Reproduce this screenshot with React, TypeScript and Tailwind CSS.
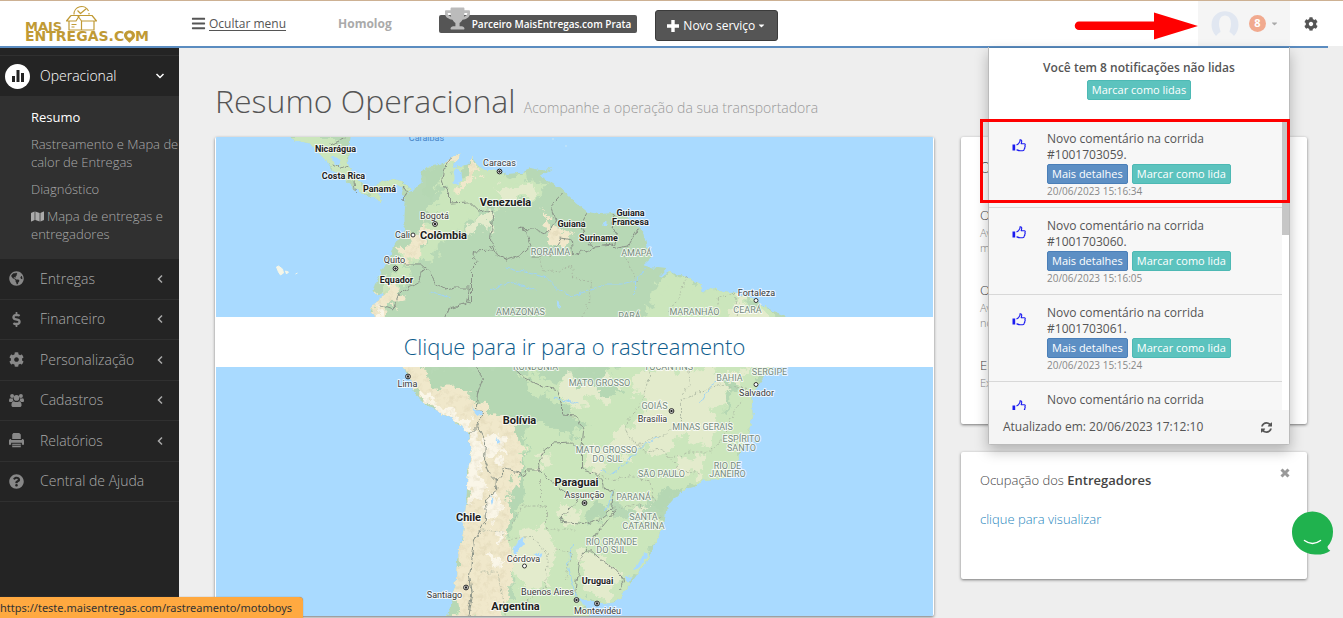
import React from "react";
import {
  FaBars,
  FaTrophy,
  FaCaretDown,
  FaCog,
  FaGlobeAmericas,
  FaDollarSign,
  FaQuestionCircle,
  FaMap,
} from "react-icons/fa";

const GOLD = "#c09a35";

function Logo() {
  return (
    <svg viewBox="0 0 130 38" className="h-[38px] w-[130px]" role="img" aria-label="Mais Entregas.com">
      <g fill={GOLD} fontFamily="'DejaVu Sans', sans-serif" fontWeight="700">
        <text x="1" y="25.500" fontSize="13">MAIS</text>
        <text x="1" y="36" fontSize="14">ENTREGAS.C</text>
        <text x="111" y="36" fontSize="14">M</text>
      </g>
      <path d="M105.500 25.500c-3.300 0-5.500 2.200-5.500 4.900 0 3.200 3.300 4.600 5.500 7.400 2.200-2.800 5.500-4.200 5.500-7.400 0-2.700-2.200-4.900-5.500-4.900z" fill={GOLD} />
      <circle cx="105.500" cy="30.500" r="2.300" fill="#fff" />
      <g fill="none" stroke={GOLD} strokeWidth="1.200" strokeLinejoin="round">
        <path d="M50 9.500A7.600 7.600 0 0 1 64.500 6M65 8v1.500" />
        <path d="M53.500 5.500l3 3 6-5" />
        <path d="M47 10.500h21l4.500 5.500h-15l-4-5.500M47 10.500L42.500 16H52l3.500-5.500M45 16v9h25v-9M57.500 16v9M47.500 19.500h5M47.500 22h3" />
      </g>
    </svg>
  );
}

function UsersIcon({ className }: { className?: string }) {
  return (
    <svg viewBox="0 0 16 14" className={className} fill="currentColor" aria-hidden="true">
      <circle cx="3.300" cy="2.200" r="2.100" />
      <circle cx="12.700" cy="2.200" r="2.100" />
      <circle cx="8" cy="4.200" r="3" />
      <path d="M1.300 4.500C.3 4.500 0 6 0 7.500 0 8.300.6 8.600 1.500 8.600H3c.5-.6 1.200-1 1.800-1.100C4.300 6.600 4 5.700 4.100 4.600c-1 .5-1.900.3-2.800-.1zM14.700 4.500c1 0 1.300 1.500 1.300 3 0 .8-.6 1.100-1.500 1.100H13c-.5-.6-1.200-1-1.800-1.100.5-.9.800-1.800.7-2.900 1 .5 1.900.3 2.800-.1z" />
      <path d="M5.200 7.700C3.500 7.700 2.600 9.600 2.600 11.800 2.600 13.200 3.400 14 4.600 14h6.800c1.200 0 2-.8 2-2.200 0-2.200-.9-4.100-2.600-4.100-1.700 1.300-3.900 1.300-5.600 0z" />
    </svg>
  );
}

function PrintIcon({ className }: { className?: string }) {
  return (
    <svg viewBox="0 0 14 14" className={className} fill="currentColor" aria-hidden="true">
      <path d="M4 0h5.500L11 1.500V5.500H3V1.500zM1.500 5.500H2V6.500h10V5.500h.5C13.400 5.500 14 6.200 14 7v4h-2V9H2v2H0V7c0-.8.700-1.500 1.500-1.500zM3 10h8v3.200H3z" />
      <path d="M3 11.500h8" stroke="#242424" strokeWidth=".7" />
    </svg>
  );
}

function ThumbIcon({ className }: { className?: string }) {
  return (
    <svg viewBox="0 0 14 13" className={className} aria-hidden="true">
      <path d="M.5 5.500h2.700v6H.5z" fill="#1a1af0" />
      <path d="M4.500 6L6.500 4.800 8 2.300V.8c1.400-.3 2 .8 1.600 2.200L9.200 4.700h3.100c1 .1 1.200 1.200.6 1.800.5.700.3 1.300-.2 1.800.3.700 0 1.300-.5 1.600.1 1.100-.5 1.800-1.600 1.800H8c-1.300 0-2.300-.5-3.500-1" fill="none" stroke="#1a1af0" strokeWidth="1.100" strokeLinejoin="round" />
    </svg>
  );
}

type Label = [number, number, string, number?];

const countries: Label[] = [
  [336, 152, "Nicarágua", 9],
  [344, 179, "Costa Rica", 9],
  [380, 192, "Panamá", 9],
  [506, 206, "Venezuela", 11],
  [444, 239, "Colômbia", 11],
  [572, 227, "Guiana", 9],
  [599, 241, "Suriname", 9],
  [631, 216, "Guiana", 9],
  [631, 225, "Francesa", 9],
  [397, 283, "Equador", 9],
  [520, 424, "Bolívia", 11],
  [577, 486, "Paraguai", 11],
  [469, 521, "Chile", 11],
  [598, 584, "Uruguai", 9],
  [516, 610, "Argentina", 11],
];
const cities: Label[] = [
  [500, 166, "Caracas"],
  [435, 219, "Bogotá"],
  [403, 238, "Cali"],
  [395, 263, "Quito"],
  [757, 296, "Fortaleza"],
  [408, 387, "Lima"],
  [757, 396, "Salvador"],
  [653, 422, "Brasília"],
  [585, 498, "Assunção"],
  [524, 562, "Córdova"],
  [548, 595, "Buenos Aires"],
  [445, 598, "Santiago"],
  [598, 614, "Montevidéu"],
];
const states: Label[] = [
  [551, 255, "RORAIMA"],
  [637, 256, "AMAPÁ"],
  [521, 315, "AMAZONAS"],
  [630, 319, "PARÁ"],
  [695, 315, "MARANHÃO"],
  [748, 313, "CEARÁ"],
  [536, 370, "RONDÔNIA"],
  [669, 370, "TOCANTINS"],
  [600, 386, "MATO GROSSO"],
  [730, 381, "BAHIA"],
  [770, 375, "SERGIPE"],
  [655, 409, "GOIÁS"],
  [703, 430, "MINAS GERAIS"],
  [742, 442, "ESPÍRITO"],
  [742, 451, "SANTO"],
  [607, 453, "MATO GROSSO"],
  [608, 462, "DO SUL"],
  [662, 477, "SÃO PAULO"],
  [728, 469, "RIO DE"],
  [728, 477, "JANEIRO"],
  [634, 500, "PARANÁ"],
  [644, 520, "SANTA"],
  [644, 529, "CATARINA"],
  [612, 545, "RIO GRANDE"],
  [612, 553, "DO SUL"],
];
const capitals = [
  [500, 171.500], [435.500, 224], [396, 268.500], [408.500, 376.500], [672, 411],
  [585, 503], [466.500, 587.500], [577, 600], [597.500, 603.500],
];
const towns = [[413.500, 235], [756.500, 300.500], [756.500, 384.500], [525, 566]];

const LAND =
  "M288 136L297 141L310 143L316 150L324 158L331 168L342 176L352 186L356 192L354 186L362 193L372 197L380 201L382 196L377 193L388 189L397 185L404 187L402 195L406 202L405 215L405 225L402 234L395 245L391 256L386 265L382 272L377 281L374 291L377 297L383 291L382 298L373 304L371 311L380 328L393 352L403 367L412 380L416 395L425 403L440 412L455 420L470 435L471 455L468 475L467 500L464 530L458 555L456 585L451 605L448 618L588 618L590 610L578 598L590 601L603 604L617 602L625 590L632 582L647 561L657 541L665 524L667 507L674 499L683 491L694 488L703 480L717 479L732 477L733 468L740 457L747 440L751 425L753 413L752 398L757 387L767 373L785 355L795 335L787 316L773 311L757 300L746 295L733 293L720 290L710 287L703 293L702 285L687 277L670 272L659 278L667 269L650 267L643 265L653 256L647 246L644 233L637 224L625 217L613 213L600 214L588 212L577 203L563 190L552 183L540 177L552 169L539 171L530 169L520 173L507 174L493 170L483 170L477 164L472 157L469 163L462 166L453 167L458 160L461 154L454 155L447 162L437 165L428 167L422 174L422 183L414 188L408 197L411 190L404 182L394 179L383 182L373 188L363 184L353 174L348 162L350 148L351 136Z";

const PALE_GREEN =
  "M288 136L310 143L331 168L354 188L380 200L377 193L402 186L408 190L394 179L373 188L353 174L348 162L340 150L330 136Z M436 166L447 158L460 178L470 172L477 165L490 172L520 180L545 186L530 200L515 198L500 207L480 208L466 220L452 232L440 240L430 252L432 235L422 240L430 220L444 205L440 190L434 180Z M418 240L424 232L420 252L405 272L395 290L386 286L400 262Z M418 258L438 245L436 256L424 258Z M655 295L670 272L703 285L733 293L773 311L795 335L785 355L757 387L753 413L740 457L732 477L703 480L683 491L660 494L640 500L630 508L612 498L600 512L630 525L660 518L665 524L632 582L617 602L578 598L588 618L448 618L520 600L512 565L508 540L520 520L512 480L524 440L532 410L555 392L522 385L515 374L545 380L575 388L600 372L640 362L648 330Z";

const CREAM_GREEN =
  "M480 216L492 212L494 225L478 230L462 232Z M497 186L515 192L525 182L541 190L527 198L514 200L499 194Z M733 297L746 296L768 318L785 325L780 350L740 366L720 360L724 330Z M640 372L665 366L690 374L710 368L735 374L748 366L740 390L722 386L728 402L712 408L720 432L700 445L682 436L662 456L640 446L628 460L610 446L618 430L640 424L652 400L632 394Z M570 374L596 368L618 384L604 402L588 396L570 410L563 398Z M600 444L612 452L606 470L596 478L586 468L590 454Z M676 460L696 452L712 462L700 474L680 476Z M520 530L546 524L556 545L548 582L528 592L512 568Z M580 548L606 556L622 574L608 598L584 590Z M562 500L575 510L566 528L556 514Z M640 505L655 500L650 512L636 516Z M512 378L520 376L524 388L512 390Z M540 452L552 450L550 464L542 470Z";

const DEEP_GREEN =
  "M416 368L432 386L450 394L478 398L490 418L520 424L525 440L522 466L512 478L510 500L506 528L515 526L522 500L524 484L526 450L528 426L545 421L560 436L572 430L578 444L583 424L566 408L548 402L528 384L514 368Z M658 492L682 488L674 499L666 507L652 510L640 504L658 500Z M592 505L600 498L604 520L592 526L586 516Z M575 367L602 367L614 374L602 378L620 388L612 396L590 384L575 382Z M425 170L444 166L442 182L434 198L424 196Z M725 386L735 384L732 410L724 420Z M734 340L742 338L740 350Z";

const ANDES =
  "M383 291L394 286L400 296L396 310L380 304L395 340L415 367L428 378L440 390L452 390L464 396L480 404L488 418L505 420L520 430L522 460L514 482L510 508L505 535L512 555L508 585L500 618L460 618L456 585L458 555L464 530L467 500L468 475L471 455L470 435L440 412L416 395L403 367L380 328L371 311L374 303Z M453 155L461 154L455 164L449 166Z M470 157L478 170L468 180L456 192L468 172Z M405 250L418 238L424 220L428 235L418 252L408 265Z M547 215L556 226L566 240L562 248L550 240L548 226Z";

const PALE_SAND =
  "M416 388L430 400L445 408L460 416L471 426L478 440L486 455L482 476L490 488L474 504L467 500L468 475L471 455L470 435L440 412L418 398Z M484 432L495 430L500 440L504 454L494 460L482 452Z M490 496L503 500L496 520L490 530L486 515Z M490 550L500 556L496 568L488 560Z M373 304L380 310L384 326L376 318Z M498 534L506 530L504 545L498 542Z";

const BORDERS =
  "M330 145L345 138 M332 164L344 168L349 166 M354 178L356 192 M404 186L408 192L402 200 M452 156L444 170L442 182L450 192L450 203L470 202L480 212L493 210L494 218L491 240L498 255L508 260L520 256L532 245L526 230L519 228L534 229L545 234L556 222L551 207L563 194 M532 256L548 256L556 246L562 238L572 240L573 255L590 250L596 247L612 245L618 248L628 246L639 228 M588 213L581 225L588 240L594 248 M614 214L612 225L618 234L614 245 M491 246L494 250L474 251L473 258L479 262L472 270L472 303L467 302L470 288L455 288L447 290L437 284L430 272L421 264L407 264L396 262L385 258 M424 268L419 282L400 292L393 310L379 305 M468 303L450 308L446 318 M476 367L484 378L478 394L477 406L483 414L478 426L470 434 M478 426L486 442L485 460L492 478L498 478L506 469L520 472L523 478L528 470L538 470L545 450L553 444L572 443L582 453L582 470L595 473L602 480L604 488L614 490L612 510L600 520L588 524L560 521L578 500L558 487L538 470 M514 368L525 378L542 386L558 390L562 405L562 415L577 416L584 430L582 453 M498 478L497 490L486 500L487 520L475 540L473 555L470 575L473 595L469 618 M616 510L600 530L585 551L580 562L576 595 M585 551L592 551L604 562L616 570L625 580L620 590";

const DOTTED =
  "M540 258L544 270L560 272L572 264L573 278L592 282L590 300L582 318 M625 255L632 270L638 282 M688 276L678 300L668 312 M734 293L718 300L716 316 M736 294L738 317 M650 372L646 390L640 406L626 424L628 436L640 446L652 438L668 434L682 420L682 400L700 392L722 384L750 390 M688 367L690 384L682 396 M640 446L645 452L664 450L672 458L690 452L712 452L724 436L730 420L742 400 M664 450L680 470L700 474 M595 473L610 480L636 476L650 482L655 500 M613 508L640 505L650 520L664 518 M541 480L541 506L547 506L547 530L576 530 M547 506L522 506L510 530 M483 530L504 532L505 540L532 536L548 555L546 588L522 604 M480 572L498 572L504 600L506 618 M556 550L572 552L566 580";

const RIVERS =
  "M505 268L525 272L548 278L560 290L572 296L592 290L606 284L622 284L638 280L645 268 M430 292L452 298 M490 290L510 282L535 290 M636 282L636 295 M600 470L612 474L628 462L640 448L660 436 M614 490L606 512 M700 404L712 385L722 378 M577 598L572 580L568 562L574 545 M554 398L580 404";

function SouthAmericaMap() {
  return (
    <svg viewBox="216 137 718 479" preserveAspectRatio="xMidYMid slice" className="block h-full w-full" role="img" aria-label="Mapa da América do Sul">
      <defs>
        <filter id="rough" x="-5%" y="-5%" width="110%" height="110%">
          <feTurbulence type="fractalNoise" baseFrequency="0.070" numOctaves="4" seed="4" />
          <feDisplacementMap in="SourceGraphic" scale="26" xChannelSelector="R" yChannelSelector="G" />
        </filter>
        <filter id="coast" x="-5%" y="-5%" width="110%" height="110%">
          <feTurbulence type="fractalNoise" baseFrequency="0.150" numOctaves="3" seed="9" />
          <feDisplacementMap in="SourceGraphic" scale="6" xChannelSelector="R" yChannelSelector="G" />
        </filter>
        <filter id="relief" x="0%" y="0%" width="100%" height="100%">
          <feTurbulence type="fractalNoise" baseFrequency="0.160" numOctaves="3" seed="2" result="n" />
          <feColorMatrix in="n" type="matrix" values="0 0 0 0 .63  0 0 0 0 .56  0 0 0 0 .36  3 0 0 0 -1.400" />
          <feComposite in2="SourceGraphic" operator="in" />
        </filter>
        <clipPath id="land"><path d={LAND} /></clipPath>
      </defs>
      <rect x="0" y="0" width="1400" height="800" fill="#a9daff" />
      <g filter="url(#coast)">
        <path d={LAND} fill="#b7d8b5" />
        <g clipPath="url(#land)">
          <g filter="url(#rough)">
            <path d={PALE_GREEN} fill="#cbe6bc" stroke="#cbe6bc" strokeWidth="6" />
            <path d={CREAM_GREEN} fill="#e3ebcc" />
            <path d={DEEP_GREEN} fill="#b5d7b3" />
            <path d={ANDES} fill="#f0e8cb" stroke="#f0e8cb" strokeWidth="3" />
            <path d={PALE_SAND} fill="#faf6e8" />
          </g>
          <path d={ANDES} filter="url(#relief)" opacity=".3" />
        </g>
        <path d={BORDERS} fill="none" stroke="#8a9388" strokeWidth="1" strokeLinejoin="round" />
        <path d={RIVERS} fill="none" stroke="#9fd3f5" strokeWidth="1" />
        <path d={DOTTED} fill="none" stroke="#a5b09c" strokeWidth=".8" strokeDasharray="2 2" />
        <g fill="#a9daff">
          <path d="M456 168L462 172L463 180L458 186L454 182L454 174Z M332 157L342 160L340 166L334 163Z M473 406L480 410L483 416L478 415Z M497 437L501 442L498 444Z M513 550L519 540L525 538L524 546L516 554Z M535 554L543 552L540 557Z M644 553L649 553L640 568L634 570Z M626 578L632 576L628 584Z M374 296L384 294L378 299Z M491 496L494 500L492 505Z" />
          <path d="M557 300l4 5-2 3zM605 222h3v4h-3z" />
        </g>
      </g>
      <path d="M277 267l2-1 4 3 1 4-3 2-2-3zM286 271l3 1-2 2zM296 274l2-1M553 139h1M566 146h1" stroke="#f5f6e8" strokeWidth="1" fill="#f5f6e8" />
      <g fontFamily="Roboto, sans-serif" textAnchor="middle" stroke="#fff" strokeOpacity=".75" strokeWidth="2" strokeLinejoin="round" paintOrder="stroke">
        <text x="427" y="141" fontSize="9" fill="#4a86c8" strokeOpacity="0">Caraíbas</text>
        <g fill="#758a7d" fontSize="9">
          {states.map(([x, y, t], i) => <text key={i} x={x} y={y}>{t}</text>)}
        </g>
        <g fill="#3a3a3a" fontSize="9">
          {cities.map(([x, y, t]) => <text key={t} x={x} y={y}>{t}</text>)}
        </g>
        <g fill="#1d1d1d" fontWeight="700">
          {countries.map(([x, y, t, s], i) => <text key={i} x={x} y={y} fontSize={s}>{t}</text>)}
        </g>
      </g>
      {capitals.map(([x, y]) => (
        <g key={x}>
          <circle cx={x} cy={y} r="2.400" fill="#fff" stroke="#222" strokeWidth="1" />
          <circle cx={x} cy={y} r="1.200" fill="#222" />
        </g>
      ))}
      {towns.map(([x, y]) => <circle key={y} cx={x} cy={y} r="2" fill="#fff" stroke="#333" strokeWidth="1" />)}
    </svg>
  );
}

const menu = [
  { label: "Entregas", Icon: FaGlobeAmericas, arrow: true },
  { label: "Financeiro", Icon: FaDollarSign, arrow: true },
  { label: "Personalização", Icon: FaCog, arrow: true },
  { label: "Cadastros", Icon: UsersIcon, arrow: true },
  { label: "Relatórios", Icon: PrintIcon, arrow: true },
  { label: "Central de Ajuda", Icon: FaQuestionCircle, arrow: false },
];

function Chevron({ d }: { d: string }) {
  return (
    <svg viewBox="0 0 10 10" className="size-2.5" fill="none" stroke="currentColor" strokeWidth="1.500" aria-hidden="true">
      <path d={d} />
    </svg>
  );
}

function Sidebar() {
  return (
    <nav className="w-[179px] shrink-0 bg-[#242424] pt-[7px] font-light text-[#aaa]">
      <a href="#operacional" className="flex h-[41px] items-center border-t border-[#303030] pl-[5px] pr-3.5 text-sm text-white">
        <span className="flex size-[25px] items-center justify-center rounded-full bg-white">
          <svg viewBox="0 0 14 14" className="size-3.5" aria-hidden="true">
            <path d="M1 7h3v6H1zM5.500 1h3v12h-3zM10 4h3v9h-3z" fill="#242424" />
          </svg>
        </span>
        <span className="ml-2.5 flex-1">Operacional</span>
        <Chevron d="M1.500 3l3.500 3.500L8.500 3" />
      </a>
      <ul className="flex h-[163px] flex-col gap-[9px] bg-[#303030] pt-3 pl-[31px] text-[13px] leading-[18px]">
        <li><a href="#resumo" className="font-normal text-white">Resumo</a></li>
        <li><a href="#calor">Rastreamento e Mapa de calor de Entregas</a></li>
        <li><a href="#diagnostico">Diagnóstico</a></li>
        <li>
          <a href="#mapa">
            <FaMap className="mr-[3px] inline size-[13px] align-[-2px]" />
            Mapa de entregas e entregadores
          </a>
        </li>
      </ul>
      <ul className="grid h-[243px] auto-rows-fr">
        {menu.map(({ label, Icon, arrow }) => (
          <li key={label} className="border-b border-[#303030]">
            <a href="#menu" className="flex h-full items-center pl-[9px] pr-3.5 text-sm">
              <Icon className="size-[15px] text-[#888]" />
              <span className="ml-4 flex-1">{label}</span>
              {arrow && <Chevron d="M7 1.500L3.500 5 7 8.500" />}
            </a>
          </li>
        ))}
      </ul>
    </nav>
  );
}

const notices = [
  { id: "1001703059", time: "20/06/2023 15:16:34" },
  { id: "1001703060", time: "20/06/2023 15:16:05" },
  { id: "1001703061", time: "20/06/2023 15:15:24" },
  { id: "1001703062", time: "20/06/2023 15:14:50" },
];

const tealButton = "h-5 rounded-[2px] border border-[#4db9b4] bg-[#5cc3be] px-1 text-[11px] leading-[18px] font-medium text-white";
const blueButton = "h-5 rounded-[2px] border border-[#4a7fb8] bg-[#5d8fc4] px-1 text-[11px] leading-[18px] font-medium text-white";

function Notifications() {
  return (
    <section className="absolute top-[46px] right-0 z-20 w-[302px] rounded-b-[3px] border border-t-0 border-[#bbb] bg-white text-xs text-[#555] shadow-[0_6px_14px_rgba(0,0,0,0.25)]">
      <div className="flex h-[73px] flex-col items-center border-t border-[#4f7fae] pt-[11px]">
        <h2 className="text-xs leading-[18px] font-semibold">Você tem 8 notificações não lidas</h2>
        <button className={"mt-[3px] " + tealButton}>Marcar como lidas</button>
      </div>
      <div className="flex h-[290px] overflow-hidden">
        <ul className="flex-1">
          {notices.map((n) => (
            <li key={n.id} className="flex h-[87px] border-t border-[#d8d8d8] bg-[#f7f7f7] pt-2.5 pl-[23px]">
              <ThumbIcon className="mt-2 h-[13px] w-3.5 shrink-0" />
              <div className="ml-[21px]">
                <p className="w-[170px] leading-4">Novo comentário na corrida #{n.id}.</p>
                <div className="mt-px flex gap-1">
                  <button className={blueButton}>Mais detalhes</button>
                  <button className={tealButton}>Marcar como lida</button>
                </div>
                <time className="block text-[10px] leading-[14px] text-[#888]">{n.time}</time>
              </div>
            </li>
          ))}
        </ul>
        <div className="w-[7px]"><div className="h-[115px] bg-[#c6c6c6]" /></div>
      </div>
      <footer className="flex h-[34px] items-center justify-between bg-[#f4f4f4] pr-[17px] pl-3.5">
        <span>Atualizado em: 20/06/2023 17:12:10</span>
        <button aria-label="Atualizar">
          <svg viewBox="0 0 1536 1536" className="size-[11px]" fill="#555" aria-hidden="true">
            <path d="M1511 928q0 5-1 7-64 268-268 434.500T764 1536q-146 0-282.500-55T238 1324l-129 129q-19 19-45 19t-45-19-19-45V960q0-26 19-45t45-19h448q26 0 45 19t19 45-19 45l-137 137q71 66 161 102t187 36q134 0 250-65t186-179q11-17 53-117 8-23 30-23h192q13 0 22.500 9.500t9.500 22.500zm25-800v448q0 26-19 45t-45 19h-448q-26 0-45-19t-19-45 19-45l138-138Q969 256 768 256q-134 0-250 65T332 500q-11 17-53 117-8 23-30 23H50q-13 0-22.500-9.500T18 608v-7q65-268 270-434.500T768 0q146 0 284 55.500T1297 212l130-129q19-19 45-19t45 19 19 45z" />
          </svg>
        </button>
      </footer>
      <div className="pointer-events-none absolute -left-[9px] top-[72px] h-[84px] w-[310px] border-[3px] border-[#f00]" />
    </section>
  );
}

function Header() {
  return (
    <header className="border-t border-[#cdb193] bg-white">
      <div className="flex h-[45px] items-center">
        <a href="#inicio" className="w-[191px] pl-6"><Logo /></a>
        <a href="#menu" className="flex items-center text-xs text-[#555]">
          <FaBars className="mr-[3px] size-[15px]" />
          <span className="underline underline-offset-2">Ocultar menu</span>
        </a>
        <span className="ml-[52px] text-xs font-bold text-[#aaa]">Homolog</span>
        <div className="ml-[47px] flex h-[18px] items-center rounded-[2px] bg-[#555] pr-1.5 pl-1.5 text-[10px] font-semibold text-white">
          <FaTrophy className="-mt-2.5 mr-0.5 size-[25px] text-[#bbb]" />
          <span className="mt-px">Parceiro MaisEntregas.com Prata</span>
        </div>
        <button className="mt-1 ml-[18px] flex h-[31px] items-center rounded-[3px] border border-[#3b3b3b] bg-[#555] px-[11px] text-[12px] text-white">
          <svg viewBox="0 0 12 12" className="mr-1 size-3" aria-hidden="true">
            <path d="M4.300 0h3.400v4.300H12v3.400H7.700V12H4.300V7.700H0V4.300h4.300z" fill="#fff" />
          </svg>
          Novo serviço
          <FaCaretDown className="ml-0.5 size-[9px]" />
        </button>
        <svg viewBox="0 0 124 28" className="mt-1 ml-auto h-7 w-[124px]" aria-hidden="true">
          <path d="M5 9.500H80V.5L124 14 80 27.500V18H5a4.200 4.200 0 0 1 0-8.500z" fill="#f00" />
        </svg>
        <div className="relative h-full">
          <button className="flex h-full w-[92px] items-center bg-[#f5f5f5] pl-[13px]" aria-label="Notificações">
            <svg viewBox="0 0 28 26" className="h-[26px] w-7" aria-hidden="true">
              <path d="M5 25C-1 19-1 8 5 3.500 10-.8 18-.8 23 3.500 29 8 29 19 23 25c-1-1.500-3-3-4.500-4 0-2 1.500-4 1.500-8 0-5-2-8.500-6-8.500S8 8 8 13c0 4 1.500 6 1.500 8C8 22 6 23.500 5 25z" fill="#e1e7f1" />
            </svg>
            <span className="ml-[10px] flex size-[17px] items-center justify-center rounded-full bg-[#f1aa8f] text-[11px] font-bold text-white">8</span>
            <FaCaretDown className="ml-1 size-[9px] text-[#aaa]" />
          </button>
          <Notifications />
        </div>
        <button className="mr-[25px] ml-3.5" aria-label="Configurações"><FaCog className="size-3.5 text-[#555]" /></button>
      </div>
      <div className="bg-[#eee] pr-[15px]"><div className="h-0.5 bg-[#5b8cc0]" /></div>
    </header>
  );
}

const summaries = [
  ["Ocorrências", "Avaliações", "médias"],
  ["Objetivos", "Avaliações", "notáveis"],
  ["Entregas", "Extrato", ""],
];

const card = "rounded-[2px] bg-white shadow-[0_1px_3px_rgba(0,0,0,0.5)]";

export default function App() {
  return (
    <div className="relative flex h-screen flex-col overflow-hidden bg-[#eee] font-['Open_Sans',sans-serif] text-[#444]">
      <Header />
      <div className="flex min-h-0 flex-1">
        <Sidebar />
        <main className="min-w-0 flex-1 px-9 pt-8">
          <h1 className="h-[57px] text-[32px] leading-[42px] font-light text-[#555]">
            Resumo Operacional <small className="text-sm text-[#999]">Acompanhe a operação da sua transportadora</small>
          </h1>
          <div className="grid grid-cols-3 items-start gap-[27px]">
            <a href="#rastreamento" className={"relative col-span-2 block h-[479px] overflow-hidden px-px " + card}>
              <SouthAmericaMap />
              <span className="absolute inset-x-px top-[180px] flex h-[50px] items-center justify-center bg-white pt-2 text-[22px] font-light text-[#0d5c8c]">
                Clique para ir para o rastreamento
              </span>
            </a>
            <div className="flex flex-col gap-7">
              <section className={"h-[287px] px-[19px] pt-[22px] font-light " + card}>
                <h2 className="text-sm leading-[18px]">Operação</h2>
                <div className="mt-7 flex flex-col gap-[25px]">
                  {summaries.map(([title, a, b]) => (
                    <div key={title}>
                      <h3 className="text-[13px] leading-5">{title}</h3>
                      <p className="text-[11px] leading-[15px] text-[#888]"><span className="block">{a}</span><span className="block">{b}</span></p>
                    </div>
                  ))}
                </div>
              </section>
              <section className={"h-[127px] px-[17px] pt-3.5 pl-[19px] text-[13px] font-light " + card}>
                <div className="flex items-start justify-between">
                  <h2 className="pt-1 leading-[20px]">Ocupação dos <b className="font-semibold">Entregadores</b></h2>
                  <button aria-label="Fechar">
                    <svg viewBox="0 0 10 10" className="mt-0.5 size-2.5" stroke="#999" strokeWidth="3" aria-hidden="true">
                      <path d="M1.500 1.500l7 7M8.500 1.500l-7 7" />
                    </svg>
                  </button>
                </div>
                <a href="#visualizar" className="mt-[19px] block leading-5 text-[#1f86bd]">clique para visualizar</a>
              </section>
            </div>
          </div>
        </main>
      </div>
      <button className="absolute right-2.5 bottom-[63px] z-30" aria-label="Abrir chat">
        <svg viewBox="0 0 41 44" className="h-11 w-[41px]" aria-hidden="true">
          <path d="M20.500 0.500A20.300 20.300 0 0 1 41 21c0 6-2 10.500-5.500 14.500 0 2 1 3 2.800 4.200C34 43 29 43.700 23 43.500 10 43 0 33.500 0 21A20.300 20.300 0 0 1 20.500.5z" fill="#20b24e" />
          <path d="M12.500 29.500q8 6 16 0" fill="none" stroke="#fff" strokeWidth="1.500" strokeLinecap="round" />
        </svg>
      </button>
      <div className="absolute bottom-0 left-0 z-30 h-[21px] rounded-tr bg-[#ffa940] pr-[11px] font-['Noto_Sans',sans-serif] text-[11px] leading-[21px] text-[#333] shadow-[0_0_1px_#666]">
        https://teste.maisentregas.com/rastreamento/motoboys
      </div>
    </div>
  );
}
